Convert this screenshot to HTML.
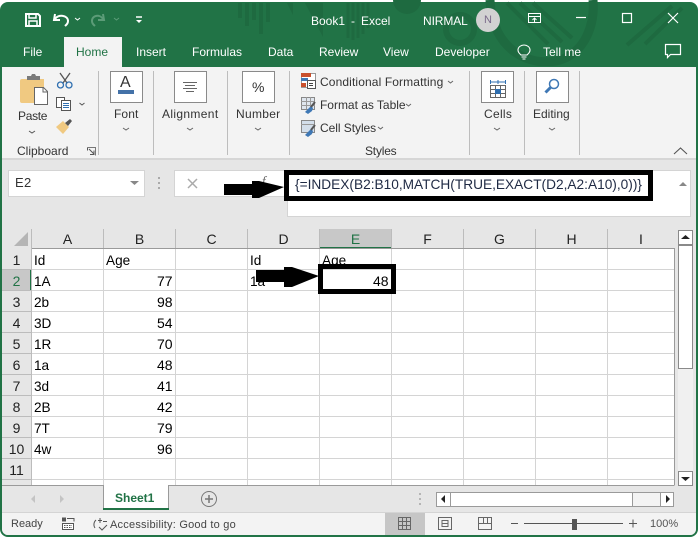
<!DOCTYPE html>
<html><head><meta charset="utf-8"><style>
html,body{margin:0;padding:0;background:#fff}
#w{position:relative;width:700px;height:539px;overflow:hidden;background:#fff;font-family:"Liberation Sans",sans-serif;font-size:12px;color:#333}
.a{position:absolute}
.t{position:absolute;white-space:nowrap;line-height:16px}
.tb{color:#fff;font-size:12px}
.c{position:absolute;white-space:nowrap;font-size:13.6px;line-height:16px;color:#000;margin-top:1px}
.n{position:absolute;white-space:nowrap;font-size:14px;line-height:16px;color:#000}
.h{position:absolute;text-align:center;font-size:14px;line-height:16px;color:#222}
.box{position:absolute;width:31px;height:30px;background:#fff;border:1px solid #8a8a8a;top:71px}
.sep{position:absolute;top:71px;height:84px;width:1px;background:#bdbdbd}
svg{position:absolute;overflow:visible}
</style></head><body><div id="w">
<div class="a" style="left:0;top:2px;width:698px;height:535px;background:#217346;border-radius:8px"></div>
<div class="a" style="left:2px;top:67px;width:694px;height:468px;background:#e6e6e6;border-radius:0 0 6px 6px"></div>
<div class="a" style="left:2px;top:67px;width:694px;height:91px;background:#f3f3f3"></div>
<div class="a" style="left:2px;top:158px;width:694px;height:2px;background:#d6d6d6"></div>

<svg width="700" height="66" style="left:0;top:0;overflow:hidden" fill="none" stroke="#1e6a40">
<g stroke-width="4"><path d="M240 3V18M247 3V26M254 3V20M261 3V34M268 3V22"/></g>
<path d="M287 3l6 12V3zM305 3l18 34V3z" fill="#1e6a40" stroke="none"/>
<path d="M348 3V38M353 3V40M358 3V38M363 3V34M368 3V28" stroke-width="3"/>
<circle cx="407" cy="0" r="14" fill="#1e6a40" stroke="none"/>
<circle cx="460" cy="29" r="14" stroke-width="6"/>
<path d="M490 0C492 50 530 68 560 60C585 52 595 25 593 0" stroke-width="9"/>
<path d="M507 3L548 44M520 3L562 42M533 3L572 38" stroke-width="4"/>
<path d="M627 45L672 6M645 44L682 8" stroke-width="4"/>
</svg>

<svg width="700" height="66" style="left:0;top:0" fill="none" stroke="#fff">
<path d="M26 14h12l2 2v10H26z" stroke-width="2"/><path d="M29 14v4h7v-4M29 26v-5h8v5" stroke-width="1.5"/>
<path d="M55 14l-1 6 6 0" stroke-width="2"/><path d="M55 19c3-5 13-4 13 2 0 3-2 4-3 5" stroke-width="2"/>
<path d="M75 18l2.500 2 2.500-2" stroke-width="1"/>
<path d="M103 14l1 6-6 0" stroke="#5c9c78" stroke-width="2"/><path d="M103 19c-3-5-11-4-11 2 0 3 2 4 3 5" stroke="#5c9c78" stroke-width="2"/>
<path d="M114 18l2.500 2 2.500-2" stroke="#5c9c78"/>
<path d="M136 17h6M136 20.500h0" stroke-width="1.500"/><path d="M136 20l3 3 3-3z" fill="#fff" stroke="none"/>
<rect x="528.500" y="13.500" width="12" height="9"/><path d="M528 16.500h13" /><path d="M534.500 22v-4M532.500 20l2-2 2 2"/>
<path d="M576 17.500h10" stroke-width="1.200"/>
<rect x="622.500" y="13.500" width="9" height="9" stroke-width="1.200"/>
<path d="M668 13l10 10M678 13l-10 10" stroke-width="1.200"/>
<path d="M521 55c-2-2-3-3-3-5 0-3 3-5 6-5s6 2 6 5c0 2-1 3-3 5zM521.500 57h5M522.500 59h3" stroke-width="1.100"/>
<path d="M665.500 44.500h15v10h-10l-3 3v-3h-2z" stroke-width="1.200"/>
</svg>

<div class="t tb" style="left:311px;top:13px">Book1</div>
<div class="t tb" style="left:351px;top:13px">-</div>
<div class="t tb" style="left:361px;top:13px">Excel</div>
<div class="t tb" style="left:423px;top:13px;letter-spacing:-.1px">NIRMAL</div>
<div class="a" style="left:476px;top:8px;width:24px;height:24px;border-radius:50%;background:#d2d2d2;color:#7a6a8a;text-align:center;line-height:24px;font-size:11px">N</div>
<div class="t tb" style="left:23px;top:44px">File</div>
<div class="a" style="left:64px;top:37px;width:58px;height:30px;background:#f3f3f3"></div>
<div class="t" style="left:76px;top:44px;color:#217346">Home</div>
<div class="t tb" style="left:136px;top:44px">Insert</div>
<div class="t tb" style="left:192px;top:44px">Formulas</div>
<div class="t tb" style="left:268px;top:44px">Data</div>
<div class="t tb" style="left:319px;top:44px">Review</div>
<div class="t tb" style="left:383px;top:44px">View</div>
<div class="t tb" style="left:435px;top:44px">Developer</div>
<div class="t tb" style="left:543px;top:44px">Tell me</div>

<svg width="120" height="80" style="left:0;top:60px" fill="none">
<path d="M22 19h22v24H22a2 2 0 0 1-2-2V21a2 2 0 0 1 2-2z" fill="#f0c981" stroke="none"/>
<path d="M27 16h4l1-2h3l1 2h4v4H27z" fill="#7a7a7a"/>
<path d="M34.500 27.500h9l4 4v13h-13z" fill="#fff" stroke="#666"/><path d="M43 27.500v4.500h4.500" stroke="#666"/>
<path d="M60 13l7 10M70 13l-7 10" stroke="#555" stroke-width="1.300"/>
<circle cx="60.500" cy="25" r="3" stroke="#2f6fb0" stroke-width="1.300"/><circle cx="69" cy="25" r="3" stroke="#2f6fb0" stroke-width="1.300"/>
<rect x="56.500" y="37.500" width="8" height="10" fill="#fff" stroke="#555"/>
<rect x="61.500" y="40.500" width="9" height="10" fill="#fff" stroke="#555"/>
<path d="M63 43.500h6M63 45.500h6M63 47.500h6" stroke="#2f6fb0"/>
<path d="M79.500 43l2.500 2 2.500-2" stroke="#555"/>
<path d="M56 67l7-6 6 6-6 7z" fill="#f0c981"/><path d="M65 63l5-4 2 2-4 5z" fill="#555"/>
<path d="M29 71l3 2 3-2" stroke="#555"/>
<path d="M87.500 87.500h8v8" stroke="#777"/><path d="M87.500 87.500v3M89 89l5 5M94 90.500v4h-4" stroke="#555"/>
</svg>
<div class="t" style="left:18px;top:108px;letter-spacing:-.3px">Paste</div>
<div class="t" style="left:17px;top:143px">Clipboard</div>

<div class="sep" style="left:98px"></div><div class="sep" style="left:153px"></div><div class="sep" style="left:227px"></div><div class="sep" style="left:289px"></div><div class="sep" style="left:469px"></div><div class="sep" style="left:524px"></div><div class="sep" style="left:579px"></div>

<div class="box" style="left:110px"></div><div class="box" style="left:174px"></div><div class="box" style="left:242px"></div><div class="box" style="left:481px"></div><div class="box" style="left:536px"></div>
<div class="t" style="left:120px;top:75px;font-size:16px;line-height:16px;color:#333">A</div>
<div class="a" style="left:118px;top:90px;width:16px;height:4px;background:#4472a8"></div>
<svg width="30" height="30" style="left:175px;top:72px" stroke="#666" fill="none"><path d="M8 10.500h14M10 13.500h10M8 16.500h14M11 19.500h8"/></svg>
<div class="t" style="left:252px;top:79px;font-size:14px">%</div>
<svg width="30" height="30" style="left:482px;top:72px" fill="none" stroke="#666"><path d="M8.500 10h15" stroke="#2f6fb0"/><path d="M8.500 8v4M23.500 8v4M16 8v4" stroke="#2f6fb0"/><rect x="8.500" y="13.500" width="15" height="12"/><path d="M8.500 17.500h15M8.500 21.500h15M13.500 13.500v12M18.500 13.500v12"/><rect x="13" y="17" width="6" height="5" fill="#2f6fb0" stroke="none"/></svg>
<svg width="30" height="30" style="left:537px;top:72px" fill="none" stroke="#3f78b5"><circle cx="17" cy="12" r="4.500" stroke-width="1.500"/><path d="M13.500 15.500L8.500 20.500" stroke-width="3"/></svg>

<div class="t" style="left:114px;top:106px;letter-spacing:.1px">Font</div>
<div class="t" style="left:162px;top:106px;letter-spacing:.35px">Alignment</div>
<div class="t" style="left:236px;top:106px;letter-spacing:.3px">Number</div>
<div class="t" style="left:484px;top:106px;letter-spacing:.3px">Cells</div>
<div class="t" style="left:533px;top:106px">Editing</div>
<svg width="700" height="160" style="left:0;top:0" fill="none" stroke="#666"><path d="M123 128l3 2 3-2M187 128l3 2 3-2M255 128l3 2 3-2M494 128l3 2 3-2M549 128l3 2 3-2"/>
<path d="M448 81l2.500 2 2.500-2M406 104l2.500 2 2.500-2M378 127l2.500 2 2.500-2"/>
<path d="M674 154l6.500-6 6.500 6" stroke="#555" stroke-width="1.100"/></svg>

<svg width="40" height="80" style="left:295px;top:65px" fill="none">
<rect x="6.500" y="8.500" width="14" height="14" fill="#fff" stroke="#999"/><rect x="6" y="8" width="10" height="4" fill="#c9502d"/><rect x="6" y="13" width="7" height="3" fill="#3f78b5"/><rect x="6" y="18" width="5" height="4" fill="#c9502d"/>
<rect x="12.500" y="15.500" width="8" height="8" fill="#fff" stroke="#555"/><path d="M14 18.500h4M14 20.500h4" stroke="#444"/>
<rect x="6.500" y="32.500" width="13" height="12" fill="#dfe6ee" stroke="#888"/><path d="M6 36.500h14M6 40.500h14M11.500 32v12M15.500 32v12" stroke="#999"/><path d="M10 47l6-6 2 2-1 3-4 3z" fill="#3f78b5"/>
<path d="M16 42l4-5" stroke="#555" stroke-width="2"/>
<rect x="6.500" y="55.500" width="13" height="12" fill="#d3deea" stroke="#888"/><path d="M6 59.500h14" stroke="#999"/><path d="M10 70l6-6 2 2-1 3-4 3z" fill="#3f78b5"/><path d="M16 65l4-5" stroke="#555" stroke-width="2"/>
</svg>
<div class="t" style="left:320px;top:74px;letter-spacing:.12px">Conditional Formatting</div>
<div class="t" style="left:320px;top:97px;letter-spacing:-.02px">Format as Table</div>
<div class="t" style="left:320px;top:120px;letter-spacing:-.05px">Cell Styles</div>
<div class="t" style="left:365px;top:143px;letter-spacing:-.2px">Styles</div>

<!-- formula bar -->
<div class="a" style="left:8px;top:170px;width:135px;height:25px;background:#fff;border:1px solid #d4d4d4"></div>
<div class="t" style="left:15px;top:175px;font-size:13px;letter-spacing:.3px">E2</div>
<svg width="12" height="8" style="left:129px;top:180px"><path d="M1 1h9l-4.500 4z" fill="#888"/></svg>
<svg width="6" height="14" style="left:157px;top:177px"><path d="M1 0h2v2H1zM1 5h2v2H1zM1 10h2v2H1z" fill="#aaa"/></svg>
<div class="a" style="left:174px;top:170px;width:112px;height:25px;background:#fff;border:1px solid #d4d4d4"></div>
<svg width="20" height="20" style="left:186px;top:176px"><path d="M2 3l9 9M11 3l-9 9" stroke="#aaa" stroke-width="1.500"/></svg>
<div class="t" style="left:262px;top:173px;font-size:13px;font-style:italic;font-family:'Liberation Serif',serif;color:#666">f</div>
<div class="a" style="left:287px;top:170px;width:402px;height:45px;background:#fff;border:1px solid #d4d4d4"></div>
<div class="a" style="left:284px;top:170px;width:359px;height:21px;border:5px solid #000;background:#fff"></div>
<div class="t" style="left:295px;top:177px;font-size:13.700px;color:#1f2a44">{=INDEX(B2:B10,MATCH(TRUE,EXACT(D2,A2:A10),0))}</div>
<svg width="12" height="8" style="left:678px;top:181px"><path d="M1 5l4-4 4 4z" fill="#888"/></svg>
<svg width="62" height="20" style="left:224px;top:180px"><path d="M0 4H28V1L35 1 60 7 35 18 28 18V15H0z" fill="#000"/></svg>

<!-- grid -->
<div class="a" style="left:2px;top:229px;width:672px;height:20px;background:#e6e6e6"></div>
<div class="a" style="left:32px;top:248px;width:642px;height:237px;background:#fff"></div>
<div class="a" style="left:2px;top:248px;width:30px;height:237px;background:#e6e6e6"></div>
<svg width="20" height="20" style="left:14px;top:231px"><path d="M14 1v14H0z" fill="#b5b5b5"/></svg>
<div class="a" style="left:320px;top:229px;width:71px;height:19px;background:#c8c8c8"></div>
<div class="a" style="left:320px;top:247px;width:72px;height:2px;background:#217346"></div>
<div class="a" style="left:2px;top:270px;width:30px;height:20px;background:#c8c8c8"></div>
<div class="a" style="left:30px;top:270px;width:2px;height:20px;background:#217346"></div>
<svg width="700" height="540" style="left:0;top:0" shape-rendering="crispEdges">
<g stroke="#d4d4d4"><path d="M32 269.500H674M32 290.500H674M32 311.500H674M32 332.500H674M32 353.500H674M32 374.500H674M32 395.500H674M32 416.500H674M32 437.500H674M32 458.500H674M32 479.500H674"/>
<path d="M103.500 248V485M175.500 248V485M247.500 248V485M319.500 248V485M391.500 248V485M463.500 248V485M535.500 248V485M607.500 248V485"/></g>
<g stroke="#bcbcbc"><path d="M2 269.500H31M2 290.500H31M2 311.500H31M2 332.500H31M2 353.500H31M2 374.500H31M2 395.500H31M2 416.500H31M2 437.500H31M2 458.500H31M2 479.500H31"/>
<path d="M31.500 229V485M103.500 229V248M175.500 229V248M247.500 229V248M319.500 229V248M391.500 229V248M463.500 229V248M535.500 229V248M607.500 229V248"/></g>
<path d="M32 248.500H674.500M674.500 248V485.500M2 485.500H674" stroke="#9a9a9a" fill="none"/>
</svg>

<div class="h" style="left:32px;top:231px;width:71px">A</div><div class="h" style="left:104px;top:231px;width:71px">B</div><div class="h" style="left:176px;top:231px;width:71px">C</div><div class="h" style="left:248px;top:231px;width:71px">D</div><div class="h" style="left:320px;top:231px;width:71px;color:#217346">E</div><div class="h" style="left:392px;top:231px;width:71px">F</div><div class="h" style="left:464px;top:231px;width:71px">G</div><div class="h" style="left:536px;top:231px;width:71px">H</div><div class="h" style="left:608px;top:231px;width:66px">I</div>

<div class="h" style="left:2px;top:252px;width:29px">1</div><div class="h" style="left:2px;top:273px;width:29px;color:#217346">2</div><div class="h" style="left:2px;top:294px;width:29px">3</div><div class="h" style="left:2px;top:315px;width:29px">4</div><div class="h" style="left:2px;top:336px;width:29px">5</div><div class="h" style="left:2px;top:357px;width:29px">6</div><div class="h" style="left:2px;top:378px;width:29px">7</div><div class="h" style="left:2px;top:399px;width:29px">8</div><div class="h" style="left:2px;top:420px;width:29px">9</div><div class="h" style="left:2px;top:441px;width:29px">10</div><div class="h" style="left:2px;top:462px;width:29px">11</div>

<div class="c" style="left:34px;top:252px">Id</div><div class="c" style="left:106px;top:252px">Age</div><div class="c" style="left:250px;top:252px">Id</div><div class="c" style="left:322px;top:252px">Age</div>
<div class="c" style="left:34px;top:273px">1A</div><div class="c" style="left:34px;top:294px">2b</div><div class="c" style="left:34px;top:315px">3D</div><div class="c" style="left:34px;top:336px">1R</div><div class="c" style="left:34px;top:357px">1a</div><div class="c" style="left:34px;top:378px">3d</div><div class="c" style="left:34px;top:399px">2B</div><div class="c" style="left:34px;top:420px">7T</div><div class="c" style="left:34px;top:441px">4w</div>
<div class="n" style="left:157px;top:273px">77</div><div class="n" style="left:157px;top:294px">98</div><div class="n" style="left:157px;top:315px">54</div><div class="n" style="left:157px;top:336px">70</div><div class="n" style="left:157px;top:357px">48</div><div class="n" style="left:157px;top:378px">41</div><div class="n" style="left:157px;top:399px">42</div><div class="n" style="left:157px;top:420px">79</div><div class="n" style="left:157px;top:441px">96</div>
<div class="c" style="left:250px;top:273px">1a</div>

<div class="a" style="left:318px;top:264px;width:68px;height:20px;border:5px solid #000"></div>
<div class="n" style="left:373px;top:273px">48</div>
<svg width="70" height="24" style="left:256px;top:267px"><path d="M0 3H28V0L36 0 63 9 36 20 28 20V15H0z" fill="#000"/></svg>

<!-- scrollbar -->
<div class="a" style="left:678px;top:230px;width:15px;height:255px;background:#f0f0f0"></div>
<div class="a" style="left:678px;top:230px;width:13px;height:13px;background:#fff;border:1px solid #8a8a8a"></div>
<div class="a" style="left:678px;top:245px;width:13px;height:122px;background:#fff;border:1px solid #8a8a8a"></div>
<div class="a" style="left:678px;top:471px;width:13px;height:13px;background:#fff;border:1px solid #8a8a8a"></div>
<svg width="20" height="260" style="left:680px;top:234px"><path d="M1 5L5.500 1 10 5z" fill="#222"/><path d="M1 243h9l-4.500 4z" fill="#222"/></svg>

<!-- tabs -->
<svg width="200" height="30" style="left:20px;top:487px"><path d="M15 8v8l-4-4zM40 8v8l4-4z" fill="#c4c4c4"/></svg>
<div class="a" style="left:103px;top:485px;width:64px;height:24px;background:#fff;border:1px solid #9a9a9a;border-top:none;border-bottom:none"></div>
<div class="a" style="left:103px;top:508px;width:66px;height:2px;background:#217346"></div>
<div class="t" style="left:115px;top:490px;font-weight:bold;color:#217346">Sheet1</div>
<svg width="20" height="20" style="left:200px;top:490px" fill="none" stroke="#777"><circle cx="9" cy="9" r="7.500"/><path d="M9 5v8M5 9h8" stroke-width="1.500"/></svg>
<svg width="6" height="14" style="left:418px;top:493px"><path d="M1 0h2v2H1zM1 5h2v2H1zM1 10h2v2H1z" fill="#b5b5b5"/></svg>
<div class="a" style="left:436px;top:492px;width:236px;height:13px;background:#f3f3f3;border:1px solid #9a9a9a"></div>
<div class="a" style="left:436px;top:492px;width:13px;height:13px;background:#fff;border:1px solid #9a9a9a"></div>
<div class="a" style="left:450px;top:492px;width:181px;height:13px;background:#fff;border:1px solid #9a9a9a"></div>
<div class="a" style="left:660px;top:492px;width:12px;height:13px;background:#fff;border:1px solid #9a9a9a"></div>
<svg width="240" height="14" style="left:436px;top:493px"><path d="M9 2v8L5 6z" fill="#222"/><path d="M230 2v8l4-4z" fill="#222"/></svg>

<!-- status -->
<div class="a" style="left:2px;top:513px;width:694px;height:22px;background:#f3f3f3;border-radius:0 0 6px 6px"></div>
<div class="a" style="left:2px;top:512px;width:694px;height:1px;background:#d4d4d4"></div>
<div class="t" style="left:11px;top:516px;font-size:11px;color:#444">Ready</div>
<svg width="20" height="16" style="left:61px;top:517px" fill="none" stroke="#555"><path d="M1 2.500h4" stroke-width="4"/><path d="M6 1.500h7v3" /><rect x="1.500" y="6.500" width="11" height="6" fill="#fff"/><path d="M3 8.500h8M3 10.500h8" stroke-dasharray="1.500 1"/></svg>
<svg width="20" height="18" style="left:91px;top:516px" fill="none" stroke="#555"><path d="M5 4a6 6 0 0 0-1 8M9 2v5M7 4.500h4M12 5.500h4M8 11l3 3 5-5"/></svg>
<div class="t" style="left:110px;top:517px;font-size:11px;letter-spacing:.22px;color:#444">Accessibility: Good to go</div>
<div class="a" style="left:385px;top:513px;width:40px;height:22px;background:#c6c6c6"></div>
<svg width="300" height="24" style="left:398px;top:512px" fill="none" stroke="#666">
<rect x="0.500" y="5.500" width="12" height="12"/><path d="M0 9.500h13M0 13.500h13M4.500 5v12M8.500 5v12"/>
<rect x="40.500" y="5.500" width="13" height="12"/><path d="M44 8.500h6v6h-6zM44 11.500h6"/>
<path d="M80.500 17.500v-12h13v12zM85.500 5.500v6h4v-6M80.500 11.500h13"/>
<path d="M113 11.500h7M126 11.500h99" stroke="#555"/>
<path d="M231 11.500h8M235 7.500v8" stroke="#555"/>
</svg>
<div class="a" style="left:572px;top:519px;width:5px;height:11px;background:#555"></div>
<div class="t" style="left:650px;top:516px;font-size:11px;color:#555">100%</div>
</div></body></html>
